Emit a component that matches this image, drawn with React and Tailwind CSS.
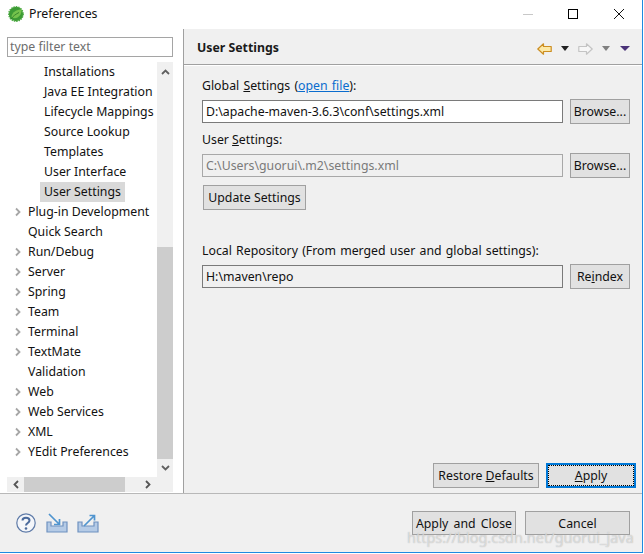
import React from "react";

const F = { fontFamily: '"Noto Sans", "Open Sans", sans-serif' };

function Chevron() {
  return (
    <svg width="8" height="10" viewBox="0 0 8 10" className="shrink-0">
      <path d="M2 1.5 L5.5 5 L2 8.5" fill="none" stroke="#a6a6a6" strokeWidth="1.8" />
    </svg>
  );
}

function Row({ label, indent, arrow, selected }) {
  return (
    <div className="h-5 flex items-center whitespace-nowrap text-[#111]">
      {indent ? (
        <span className={`ml-[33px] px-[4px] h-5 leading-5 ${selected ? "bg-[#d9d9d9]" : ""}`}>{label}</span>
      ) : (
        <>
          <span className="w-[21px] pl-[7px] flex items-center">{arrow ? <Chevron /> : null}</span>
          <span>{label}</span>
        </>
      )}
    </div>
  );
}

function Btn({ children, className = "" }) {
  return (
    <button className={`h-[25px] shrink-0 border border-[#a0a0a0] bg-[#e1e1e1] text-[#111] flex items-center justify-center pt-[2px] text-[12.3px] leading-none ${className}`}>
      {children}
    </button>
  );
}

function Field({ value, tone }) {
  const cls =
    tone === "disabled"
      ? "border-[#a8a8a8] bg-[#f0f0f0] text-[#7a7a7a]"
      : tone === "readonly"
      ? "border-[#7a7a7a] bg-[#f0f0f0] text-[#111]"
      : "border-[#7a7a7a] bg-white text-[#111]";
  return <div className={`flex-1 mt-px h-[23px] border px-[3px] pt-[2px] flex items-center ${cls}`}>{value}</div>;
}

function Arrow({ fill, stroke, flip }) {
  return (
    <svg width="15" height="12" viewBox="0 0 15 12" className="block" style={flip ? { transform: "scaleX(-1)" } : undefined}>
      <path d="M0.8 6 L6.5 0.8 V3.5 H14.2 V8.5 H6.5 V11.2 Z" fill={fill} stroke={stroke} strokeWidth="1.2" strokeLinejoin="round" />
    </svg>
  );
}

function Tri({ color, w = 8 }) {
  return (
    <svg width={w} height="5" viewBox={`0 0 ${w} 5`} className="block">
      <path d={`M0 0 H${w} L${w / 2} 5 Z`} fill={color} />
    </svg>
  );
}

function Tray({ out }) {
  return (
    <svg width="22" height="20" viewBox="0 0 22 20" className="block">
      <path d="M1 9 H5 V13 H17 V9 H21 V19 H1 Z" fill="#b5cbe6" stroke="#6f92c0" strokeWidth="1.2" />
      <path
        d={out ? "M7 13 L17 3 M12.5 2.5 H17.5 V7.5" : "M3 1 L13 11 M13.5 6 V11.5 H8"}
        fill="none"
        stroke="#4f94cf"
        strokeWidth="1.7"
      />
    </svg>
  );
}

const tree = [
  ["Installations", 1],
  ["Java EE Integration", 1],
  ["Lifecycle Mappings", 1],
  ["Source Lookup", 1],
  ["Templates", 1],
  ["User Interface", 1],
  ["User Settings", 1, 0, 1],
  ["Plug-in Development", 0, 1],
  ["Quick Search", 0, 0],
  ["Run/Debug", 0, 1],
  ["Server", 0, 1],
  ["Spring", 0, 1],
  ["Team", 0, 1],
  ["Terminal", 0, 1],
  ["TextMate", 0, 1],
  ["Validation", 0, 0],
  ["Web", 0, 1],
  ["Web Services", 0, 1],
  ["XML", 0, 1],
  ["YEdit Preferences", 0, 1],
];

export default function App() {
  return (
    <div className="w-[644px] h-[554px] bg-white overflow-hidden">
      <div style={F} className="relative w-[643px] h-[553px] overflow-hidden bg-[#f0f0f0] text-[12.3px] text-[#111] flex flex-col border-r border-b border-[#1f8ae0]">
        <div className="h-[29px] shrink-0 bg-white flex items-center pl-2 pb-px">
          <svg width="16" height="16" viewBox="0 0 16 16" className="block">
            <circle cx="8" cy="8" r="7.2" fill="#3c9a35" stroke="#4aa93f" strokeWidth="1.4" strokeDasharray="1.4 1" />
            <path d="M3.5 11.5 C3.5 6 9 3.5 13.5 3.5 C14 8.5 10 13 5.5 12 Z" fill="#74c24c" />
            <path d="M3 13 C5 10 8 8 11 6.5" stroke="#2f7f2a" strokeWidth="0.9" fill="none" />
          </svg>
          <span className="ml-[5px]">Preferences</span>
          <div className="ml-auto flex items-center pr-[18px]">
            <span className="w-[10px] h-px bg-[#c8c8c8] mr-[35px]" />
            <span className="w-[10px] h-[10px] border border-black mr-[36px]" />
            <svg width="10" height="10" viewBox="0 0 10 10" className="block">
              <path d="M0 0 L10 10 M10 0 L0 10" stroke="#111" strokeWidth="1" />
            </svg>
          </div>
        </div>

        <div className="flex-1 flex min-h-0">
          <div className="w-[184px] shrink-0 bg-white border-r border-[#a0a0a0] pl-[7px] pr-[10px] pt-2 flex flex-col">
            <div className="h-5 shrink-0 border border-[#a5a5a5] bg-white px-[2px] flex items-center text-[#6d6d6d]">type filter text</div>
            <div className="mt-[5px] flex h-[415px] shrink-0">
              <div className="w-[150px] bg-white overflow-hidden">
                {tree.map(([l, i, a, s]) => (
                  <Row key={l} label={l} indent={i} arrow={a} selected={s} />
                ))}
              </div>
              <div className="w-[16px] bg-[#f0f0f0] flex flex-col items-center">
                <div className="h-[19px] shrink-0 flex items-center justify-center">
                  <svg width="9" height="6" viewBox="0 0 9 6" className="block"><path d="M1 5 L4.5 1.5 L8 5" fill="none" stroke="#606060" strokeWidth="1.8" /></svg>
                </div>
                <div className="h-[166px] shrink-0" />
                <div className="w-full flex-1 bg-[#cdcdcd]" />
                <div className="h-[18px] shrink-0 flex items-center justify-center">
                  <svg width="9" height="6" viewBox="0 0 9 6" className="block"><path d="M1 1 L4.5 4.5 L8 1" fill="none" stroke="#606060" strokeWidth="1.8" /></svg>
                </div>
              </div>
            </div>
            <div className="h-[15px] shrink-0 flex items-center bg-[#f0f0f0]">
              <div className="w-[17px] flex justify-center">
                <svg width="6" height="9" viewBox="0 0 6 9" className="block"><path d="M5 1 L1.5 4.5 L5 8" fill="none" stroke="#555" strokeWidth="1.8" /></svg>
              </div>
              <div className="w-[101px] h-full bg-[#cdcdcd]" />
              <div className="w-[48px] flex justify-center pr-[2px]">
                <svg width="6" height="9" viewBox="0 0 6 9" className="block"><path d="M1 1 L4.5 4.5 L1 8" fill="none" stroke="#555" strokeWidth="1.8" /></svg>
              </div>
            </div>
          </div>

          <div className="flex-1 min-w-0 flex flex-col">
            <div className="h-9 shrink-0 flex items-center pl-[13px] pr-[12px] pt-[4px] border-b border-[#a0a0a0]">
              <span className="font-bold text-[#1a1a1a]">User Settings</span>
              <div className="ml-auto flex items-center">
                <Arrow fill="#fde9a6" stroke="#cc8e22" />
                <span className="ml-[9px]"><Tri color="#222" /></span>
                <span className="ml-[9px]"><Arrow fill="#f7f7f7" stroke="#c4c4c4" flip /></span>
                <span className="ml-[9px]"><Tri color="#808080" /></span>
                <span className="ml-[10px]"><Tri color="#4a3278" w={10} /></span>
              </div>
            </div>
            <div className="flex-1 min-h-0 border-t border-white pl-[18px] pr-[6px] pt-[9px] pb-[5px] flex flex-col">
              <div className="pr-[6px] flex flex-col">
                <div className="h-5 leading-[22px] [word-spacing:1px]">
                  Global <u>S</u>ettings (<span className="text-[#0a6cce] underline">open file</span>):
                </div>
                <div className="mt-[4px] flex items-start gap-[7px]">
                  <Field value="D:\apache-maven-3.6.3\conf\settings.xml" />
                  <Btn className="w-[60px]">Browse...</Btn>
                </div>
                <div className="mt-[5px] h-5 leading-[22px]">
                  User <u>S</u>ettings:
                </div>
                <div className="mt-[4px] flex items-start gap-[7px]">
                  <Field value="C:\Users\guorui\.m2\settings.xml" tone="disabled" />
                  <Btn className="w-[60px]">Browse...</Btn>
                </div>
                <Btn className="mt-[7px] ml-px w-[103px]">Update Settings</Btn>
                <div className="mt-[30px] h-5 leading-[22px] [word-spacing:1px]">Local Repository (From merged user and global settings):</div>
                <div className="mt-[4px] flex items-start gap-[7px]">
                  <Field value="H:\maven\repo" tone="readonly" />
                  <Btn className="w-[60px]">Re<u>i</u>ndex</Btn>
                </div>
              </div>
              <div className="mt-auto flex justify-end items-center gap-[7px]">
                <Btn className="w-[106px]">Restore <u className="ml-[3px]">D</u>efaults</Btn>
                <button className="w-[90px] h-[25px] border-2 border-[#0078d7] bg-[#e1e1e1] flex text-[12.3px] text-[#111]">
                  <span className="flex-1 border border-dotted border-black flex items-center justify-center leading-none pt-[2px]">
                    <span><u>A</u>pply</span>
                  </span>
                </button>
              </div>
            </div>
          </div>
        </div>

        <div className="h-[59px] shrink-0 border-t border-[#b8b8b8] pl-[16px] pr-[12px] pt-[17px] flex items-start">
          <svg width="20" height="20" viewBox="0 0 20 20" className="block mt-[2px]">
            <circle cx="10" cy="10" r="9.2" fill="#f4f6fa" stroke="#5f7ba8" strokeWidth="1.2" />
            <path d="M6.5 7.5 C6.5 3.8 13.5 3.8 13.5 7.5 C13.5 10 10 10 10 12.5" fill="none" stroke="#4a6a9c" strokeWidth="2" />
            <circle cx="10" cy="15.5" r="1.3" fill="#4a6a9c" />
          </svg>
          <span className="ml-[10px] mt-[2px]"><Tray /></span>
          <span className="ml-[9px] mt-[2px]"><Tray out /></span>
          <div className="ml-auto flex gap-[9px]">
            <Btn className="w-[104px] !h-6 [word-spacing:2px]">Apply and Close</Btn>
            <Btn className="w-[105px] !h-6">Cancel</Btn>
          </div>
        </div>

        <div className="absolute left-[407px] top-[527px] text-[14.5px] leading-5 whitespace-nowrap text-white/50 [text-shadow:0_0_1px_#a8a8a8] pointer-events-none">
          https://blog.csdn.net/guorui_java
        </div>
      </div>
    </div>
  );
}
